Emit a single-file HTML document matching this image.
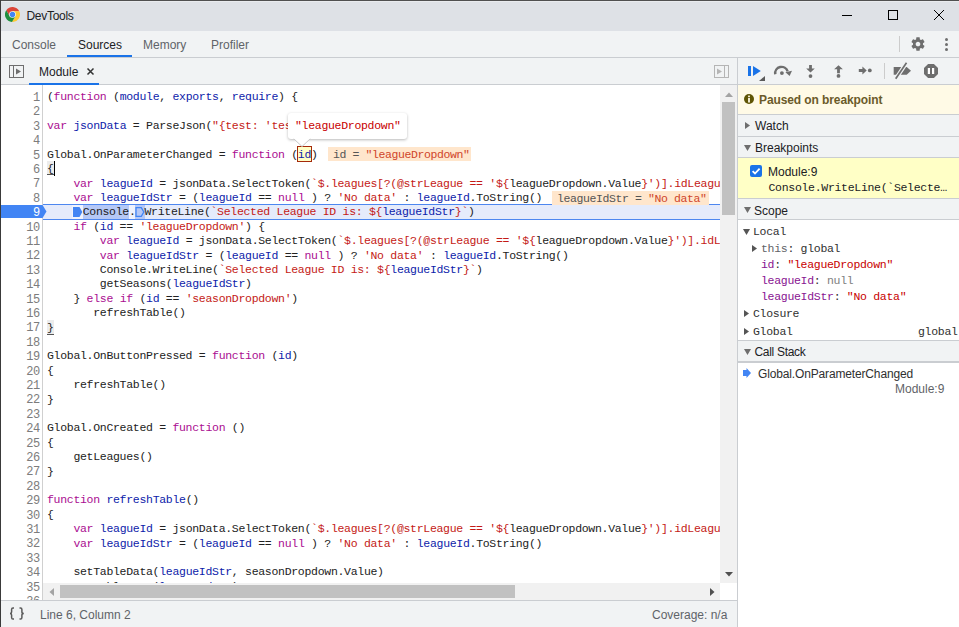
<!DOCTYPE html>
<html><head><meta charset="utf-8">
<style>
*{box-sizing:border-box}
html,body{margin:0;padding:0}
body{width:959px;height:627px;position:relative;overflow:hidden;background:#fff;font-family:"Liberation Sans",sans-serif;font-size:12px;color:#202124}
.a{position:absolute}
.mono{font-family:"Liberation Mono",monospace;font-size:11px}
.sm{font-size:11.5px;letter-spacing:-0.3px;white-space:pre}
.tb{background:#f1f3f4}
.hl{background:#cacdd1}
/* code */
#code{position:absolute;left:43px;top:85px;width:677px;height:498px;overflow:hidden}
#gut{position:absolute;left:1px;top:85px;width:41px;height:515px;overflow:visible;background:#fff}
.ln{position:absolute;left:0;width:38.5px;text-align:right;font-family:"Liberation Mono",monospace;font-size:12px;letter-spacing:-0.6px;line-height:14.4px;height:14.4px;color:#7c7c7c}
.cl{position:absolute;left:4px;white-space:pre;font-family:"Liberation Mono",monospace;font-size:11.5px;letter-spacing:-0.3px;line-height:14.4px;height:14.4px;color:#222}
.k{color:#aa0d91}
.s{color:#c41a16}
.d{color:#0d22aa}
.exec{position:absolute;left:0;top:119px;width:677px;height:16px;background:#e5ebfb;border-top:1px solid #4d87f0;border-bottom:1px solid #4d87f0}
.HL{background:#b9cbf5}
.m1,.m2{display:inline-block;width:10px;height:10px;vertical-align:-1px}
.ID{}
.BR{}
.sec{position:absolute;left:738px;width:221px;background:#f1f3f4;border-bottom:1px solid #cacdd1}
.tri-r{position:absolute;width:0;height:0;border-top:3.5px solid transparent;border-bottom:3.5px solid transparent;border-left:5px solid #6e6e6e}
.tri-d{position:absolute;width:0;height:0;border-left:3.5px solid transparent;border-right:3.5px solid transparent;border-top:6px solid #6e6e6e}
</style></head><body>
<!-- window frame -->
<div class="a" style="left:0;top:0;width:959px;height:1px;background:#505050"></div>
<div class="a" style="left:0;top:0;width:1px;height:627px;background:#3a3a3a"></div>
<!-- title bar -->
<div class="a" style="left:1px;top:1px;width:958px;height:30px;background:#dee1e6"></div>
<div class="a" style="left:1px;top:1px;width:958px;height:1px;background:#e9ebee"></div>
<div class="a" id="title" style="left:26.5px;top:9px;font-size:12px;color:#202124;letter-spacing:-0.3px">DevTools</div>


<!-- tab bar -->
<div class="a tb" style="left:1px;top:31px;width:958px;height:26px"></div>
<div class="a hl" style="left:1px;top:57px;width:958px;height:1px"></div>
<div class="a" style="left:12px;top:38px;color:#5f6368">Console</div>
<div class="a" style="left:78px;top:38px;color:#202124">Sources</div>
<div class="a" style="left:143px;top:38px;color:#5f6368">Memory</div>
<div class="a" style="left:211px;top:38px;color:#5f6368">Profiler</div>
<div class="a" style="left:67px;top:55px;width:65px;height:2px;background:#1a73e8"></div>

<!-- sources toolbar -->
<div class="a tb" style="left:1px;top:58px;width:958px;height:26px"></div>
<div class="a hl" style="left:1px;top:84px;width:958px;height:1px"></div>
<div class="a" style="left:39px;top:65px;color:#202124">Module</div>
<div class="a" style="left:29px;top:83px;width:70px;height:2px;background:#1a73e8"></div>

<!-- vertical separator -->
<div class="a hl" style="left:737px;top:58px;width:1px;height:569px"></div>

<!-- gutter -->
<div id="gut">
<div class="ln" style="top:6.05px">1</div>
<div class="ln" style="top:20.45px">2</div>
<div class="ln" style="top:34.85px">3</div>
<div class="ln" style="top:49.25px">4</div>
<div class="ln" style="top:63.65px">5</div>
<div class="ln" style="top:78.05px">6</div>
<div class="ln" style="top:92.45px">7</div>
<div class="ln" style="top:106.85px">8</div>
<svg class="a" style="left:0;top:120px;z-index:5" width="46" height="13" viewBox="0 0 46 13"><path d="M0 0H41.5L45.5 6.5L41.5 13H0Z" fill="#4285f4"/></svg>
<div class="ln" style="top:121.25px;color:#fff;z-index:6">9</div>
<div class="ln" style="top:135.65px">10</div>
<div class="ln" style="top:150.05px">11</div>
<div class="ln" style="top:164.45px">12</div>
<div class="ln" style="top:178.85px">13</div>
<div class="ln" style="top:193.25px">14</div>
<div class="ln" style="top:207.65px">15</div>
<div class="ln" style="top:222.05px">16</div>
<div class="ln" style="top:236.45px">17</div>
<div class="ln" style="top:250.85px">18</div>
<div class="ln" style="top:265.25px">19</div>
<div class="ln" style="top:279.65px">20</div>
<div class="ln" style="top:294.05px">21</div>
<div class="ln" style="top:308.45px">22</div>
<div class="ln" style="top:322.85px">23</div>
<div class="ln" style="top:337.25px">24</div>
<div class="ln" style="top:351.65px">25</div>
<div class="ln" style="top:366.05px">26</div>
<div class="ln" style="top:380.45px">27</div>
<div class="ln" style="top:394.85px">28</div>
<div class="ln" style="top:409.25px">29</div>
<div class="ln" style="top:423.65px">30</div>
<div class="ln" style="top:438.05px">31</div>
<div class="ln" style="top:452.45px">32</div>
<div class="ln" style="top:466.85px">33</div>
<div class="ln" style="top:481.25px">34</div>
<div class="ln" style="top:495.65px">35</div>
<div class="ln" style="top:510.05px">36</div>
</div>
<div class="a" style="left:42px;top:85px;width:1px;height:515px;background:#d0d0d0"></div>
<div class="a" style="left:47px;top:161px;width:7px;height:14px;background:#ececec;border-bottom:1px solid #555"></div>
<div class="a" style="left:47px;top:320px;width:7px;height:15px;background:#ececec;border-bottom:1px solid #555"></div>
<div id="code">
<div class="cl" style="top:5.25px">(<span class="k">function</span> (<span class="d">module</span>, <span class="d">exports</span>, <span class="d">require</span>) {</div>
<div class="cl" style="top:34.05px"><span class="k">var</span> <span class="d">jsonData</span> = ParseJson(<span class="s">"{test: 'test'}"</span>)</div>
<div class="cl" style="top:62.85px">Global.OnParameterChanged = <span class="k">function</span> (<span class="ID">id</span>)</div>
<div class="cl" style="top:77.25px"><span class="BR">{</span></div>
<div class="cl" style="top:91.65px">    <span class="k">var</span> <span class="d">leagueId</span> = jsonData.SelectToken(<span class="s">`$.leagues[?(@strLeague == '${</span>leagueDropdown.Value<span class="s">}')].idLeague`)</span></div>
<div class="cl" style="top:106.05px">    <span class="k">var</span> <span class="d">leagueIdStr</span> = (<span class="d">leagueId</span> == <span class="k">null</span> ) ? <span class="s">'No data'</span> : <span class="d">leagueId</span>.ToString()</div>
<div class="exec"></div><div class="a" style="left:29px;top:120px;width:11px;height:14px;background:#eff3fd"></div><div class="a" style="left:40px;top:120px;width:45.75px;height:14px;background:#b5c8f6"></div><div class="a" style="left:85.75px;top:120px;width:6.25px;height:14px;background:#eef2fd"></div><div class="a" style="left:92px;top:120px;width:9.7px;height:14px;background:#b5c8f6"></div><svg class="a" style="left:30px;top:122px" width="10" height="10" viewBox="0 0 10 10"><path d="M0 0H6.5L9.3 5L6.5 10H0Z" fill="#4285f4"/></svg><svg class="a" style="left:92px;top:122px" width="10" height="10" viewBox="0 0 10 10"><path d="M1 0.7H6.3L8.8 5L6.3 9.3H1Z" fill="none" stroke="#4285f4" stroke-width="1.3"/></svg>
<div class="cl" style="top:120.45px"></div><div class="cl" style="top:120.45px;left:39.7px">Console.</div><div class="cl" style="top:120.45px;left:101.5px">WriteLine(<span class="s">`Selected League ID is: ${</span><span class="d">leagueIdStr</span><span class="s">}`</span>)</div>
<div class="cl" style="top:134.85px">    <span class="k">if</span> (<span class="d">id</span> == <span class="s">'leagueDropdown'</span>) {</div>
<div class="cl" style="top:149.25px">        <span class="k">var</span> <span class="d">leagueId</span> = jsonData.SelectToken(<span class="s">`$.leagues[?(@strLeague == '${</span>leagueDropdown.Value<span class="s">}')].idLeague`)</span></div>
<div class="cl" style="top:163.65px">        <span class="k">var</span> <span class="d">leagueIdStr</span> = (<span class="d">leagueId</span> == <span class="k">null</span> ) ? <span class="s">'No data'</span> : <span class="d">leagueId</span>.ToString()</div>
<div class="cl" style="top:178.05px">        Console.WriteLine(<span class="s">`Selected League ID is: ${</span><span class="d">leagueIdStr</span><span class="s">}`</span>)</div>
<div class="cl" style="top:192.45px">        getSeasons(<span class="d">leagueIdStr</span>)</div>
<div class="cl" style="top:206.85px">    } <span class="k">else</span> <span class="k">if</span> (<span class="d">id</span> == <span class="s">'seasonDropdown'</span>)</div>
<div class="cl" style="top:221.25px">       refreshTable()</div>
<div class="cl" style="top:235.65px"><span class="BR">}</span></div>
<div class="cl" style="top:264.45px">Global.OnButtonPressed = <span class="k">function</span> (<span class="d">id</span>)</div>
<div class="cl" style="top:278.85px">{</div>
<div class="cl" style="top:293.25px">    refreshTable()</div>
<div class="cl" style="top:307.65px">}</div>
<div class="cl" style="top:336.45px">Global.OnCreated = <span class="k">function</span> ()</div>
<div class="cl" style="top:350.85px">{</div>
<div class="cl" style="top:365.25px">    getLeagues()</div>
<div class="cl" style="top:379.65px">}</div>
<div class="cl" style="top:408.45px"><span class="k">function</span> <span class="d">refreshTable</span>()</div>
<div class="cl" style="top:422.85px">{</div>
<div class="cl" style="top:437.25px">    <span class="k">var</span> <span class="d">leagueId</span> = jsonData.SelectToken(<span class="s">`$.leagues[?(@strLeague == '${</span>leagueDropdown.Value<span class="s">}')].idLeague`)</span></div>
<div class="cl" style="top:451.65px">    <span class="k">var</span> <span class="d">leagueIdStr</span> = (<span class="d">leagueId</span> == <span class="k">null</span> ) ? <span class="s">'No data'</span> : <span class="d">leagueId</span>.ToString()</div>
<div class="cl" style="top:480.45px">    setTableData(<span class="d">leagueIdStr</span>, seasonDropdown.Value)</div>
<div class="cl" style="top:494.85px">    setTableData(<span class="d">leagueIdStr</span>)</div>
</div>


<!-- code overlays -->
<div class="a" style="left:297px;top:146px;width:15px;height:16px;background:#fffec6;border:1px solid #a52a0a"></div>
<div class="a mono" style="left:297.8px;top:147.6px;font-size:11.5px;letter-spacing:-0.3px;line-height:14.4px;color:#0d22aa">id</div>
<div class="a" style="left:327.5px;top:147px;width:143.5px;height:14px;background:#ffe6cc"></div>
<div class="a mono" style="left:333px;top:147.5px;font-size:11.5px;letter-spacing:-0.4px;line-height:14px;white-space:pre"><span style="color:#555">id = </span><span style="color:#d0452a">"leagueDropdown"</span></div>
<div class="a" style="left:552px;top:191px;width:157px;height:14px;background:#ffe6cc"></div>
<div class="a mono" style="left:557px;top:191.5px;font-size:11.5px;letter-spacing:-0.4px;line-height:14px;white-space:pre"><span style="color:#555">leagueIdStr = </span><span style="color:#d0452a">"No data"</span></div>
<div class="a" style="left:288px;top:113px;width:119px;height:26px;background:#fff;border-radius:3px;box-shadow:0 1px 3px rgba(0,0,0,.28)"></div>
<svg class="a" style="left:292.5px;top:137px" width="18" height="10" viewBox="0 0 18 10"><path d="M0.5 1.5L9 9.5L17.5 1.5" fill="#fff" stroke="#c8c8c8" stroke-width="1"/><rect x="0" y="0" width="18" height="1.6" fill="#fff"/></svg>
<div class="a mono" style="left:295px;top:119px;font-size:11.5px;letter-spacing:-0.3px;line-height:14.4px;color:#c80000;white-space:pre">"leagueDropdown"</div>
<div class="a" style="left:54px;top:161px;width:1px;height:15px;background:#000"></div>

<!-- scrollbars -->
<div class="a" style="left:720px;top:85px;width:17px;height:498px;background:#f1f1f1"></div>
<div class="a" style="left:722px;top:102px;width:13px;height:113px;background:#c1c1c1"></div>
<div class="a" style="left:43px;top:583px;width:677px;height:17px;background:#f1f1f1"></div>
<div class="a" style="left:60px;top:585px;width:455px;height:13px;background:#c1c1c1"></div>

<svg class="a" style="left:724.5px;top:91.5px" width="8" height="5" viewBox="0 0 8 5"><path d="M0 5L4 0.5L8 5Z" fill="#a3a3a3"/></svg>
<svg class="a" style="left:724.5px;top:571.5px" width="8" height="5" viewBox="0 0 8 5"><path d="M0 0H8L4 4.5Z" fill="#505050"/></svg>
<svg class="a" style="left:709.5px;top:587.5px" width="5" height="8" viewBox="0 0 5 8"><path d="M0 0L4.5 4L0 8Z" fill="#505050"/></svg>
<svg class="a" style="left:48.5px;top:587.5px" width="5" height="8" viewBox="0 0 5 8"><path d="M5 0L0.5 4L5 8Z" fill="#a3a3a3"/></svg>
<div class="a" style="left:720px;top:583px;width:17px;height:17px;background:#fff"></div>
<!-- status bar -->
<div class="a hl" style="left:1px;top:600px;width:736px;height:1px"></div>
<div class="a tb" style="left:1px;top:601px;width:736px;height:26px"></div>
<div class="a" style="left:40px;top:608px;color:#5f6368">Line 6, Column 2</div>
<div class="a" style="left:652px;top:608px;color:#5f6368">Coverage: n/a</div>

<svg class="a" style="left:9px;top:607px" width="17" height="13" viewBox="0 0 17 13"><path d="M5 1H4C3 1 2.6 1.6 2.6 2.6V5C2.6 5.8 2 6.5 1 6.5C2 6.5 2.6 7.2 2.6 8V10.4C2.6 11.4 3 12 4 12H5" fill="none" stroke="#5a5a5a" stroke-width="1.5"/><path d="M10.5 1H11.5C12.5 1 12.9 1.6 12.9 2.6V5C12.9 5.8 13.5 6.5 14.8 6.5C13.5 6.5 12.9 7.2 12.9 8V10.4C12.9 11.4 12.5 12 11.5 12H10.5" fill="none" stroke="#5a5a5a" stroke-width="1.5"/></svg>
<!-- sidebar -->
<div class="a" style="left:738px;top:85px;width:221px;height:30px;background:#fffae6;border-bottom:1px solid #cacdd1"></div>
<div class="a" style="left:759px;top:93px;font-weight:bold;color:#6b5a2a;letter-spacing:-0.1px">Paused on breakpoint</div>
<div class="sec" style="top:115px;height:22px"></div>
<div class="a" style="left:755px;top:119px">Watch</div>
<div class="sec" style="top:137px;height:21px"></div>
<div class="a" style="left:755px;top:141px">Breakpoints</div>
<div class="a" style="left:738px;top:158px;width:221px;height:41px;background:#ffffc6;border-bottom:1px solid #cacdd1"></div>
<div class="a" style="left:768px;top:165px">Module:9</div>
<div class="sec" style="top:199px;height:21px"></div>
<div class="a" style="left:754px;top:204px">Scope</div>
<div class="sec" style="top:341px;height:22px;border-bottom:2px solid #cacdd1"></div>
<div class="a" style="left:754.5px;top:345px;letter-spacing:-0.3px">Call Stack</div>
<div class="a" style="left:758px;top:367px;letter-spacing:-0.15px;color:#303030">Global.OnParameterChanged</div>
<div class="a" style="left:895px;top:382px;color:#5f6368">Module:9</div>

<!-- sidebar extras -->
<svg class="a" style="left:744px;top:94px" width="10" height="10" viewBox="0 0 10 10"><circle cx="5" cy="5" r="5" fill="#5f5505"/><rect x="4.1" y="1.6" width="1.8" height="1.6" fill="#fffae6"/><rect x="4.1" y="4" width="1.8" height="4.5" fill="#fffae6"/></svg>
<svg class="a" style="left:745px;top:122px" width="5" height="7" viewBox="0 0 5 7"><path d="M0 0L5 3.5L0 7Z" fill="#6e6e6e"/></svg>
<svg class="a" style="left:744px;top:145px" width="7" height="6" viewBox="0 0 7 6"><path d="M0 0H7L3.5 6Z" fill="#6e6e6e"/></svg>
<svg class="a" style="left:744px;top:207px" width="7" height="6" viewBox="0 0 7 6"><path d="M0 0H7L3.5 6Z" fill="#6e6e6e"/></svg>
<svg class="a" style="left:744px;top:349px" width="7" height="6" viewBox="0 0 7 6"><path d="M0 0H7L3.5 6Z" fill="#6e6e6e"/></svg>
<svg class="a" style="left:750px;top:165px" width="12" height="12" viewBox="0 0 12 12"><rect width="12" height="12" rx="2" fill="#1a73e8"/><path d="M2.6 6.2L5 8.5L9.6 3.6" fill="none" stroke="#fff" stroke-width="1.8"/></svg>
<div class="a mono sm" style="left:768.5px;top:181px;color:#202124">Console.WriteLine(`Selecte…</div>
<svg class="a" style="left:743px;top:229px" width="7" height="6" viewBox="0 0 7 6"><path d="M0 0H7L3.5 6Z" fill="#555"/></svg>
<div class="a mono sm" style="left:753px;top:225px;color:#303030">Local</div>
<svg class="a" style="left:752px;top:245px" width="5" height="7" viewBox="0 0 5 7"><path d="M0 0L5 3.5L0 7Z" fill="#555"/></svg>
<div class="a mono sm" style="left:761px;top:241.5px"><span style="color:#5f6368">this</span><span style="color:#303030">: global</span></div>
<div class="a mono sm" style="left:761px;top:258px"><span style="color:#881391">id</span><span style="color:#303030">: </span><span style="color:#c80000">"leagueDropdown"</span></div>
<div class="a mono sm" style="left:761px;top:274px"><span style="color:#881391">leagueId</span><span style="color:#303030">: </span><span style="color:#808080">null</span></div>
<div class="a mono sm" style="left:761px;top:290px"><span style="color:#881391">leagueIdStr</span><span style="color:#303030">: </span><span style="color:#c80000">"No data"</span></div>
<svg class="a" style="left:744px;top:310px" width="5" height="7" viewBox="0 0 5 7"><path d="M0 0L5 3.5L0 7Z" fill="#555"/></svg>
<div class="a mono sm" style="left:753px;top:307px;color:#303030">Closure</div>
<svg class="a" style="left:744px;top:328px" width="5" height="7" viewBox="0 0 5 7"><path d="M0 0L5 3.5L0 7Z" fill="#555"/></svg>
<div class="a mono sm" style="left:753px;top:324.5px;color:#303030">Global</div>
<div class="a mono sm" style="left:918px;top:324.5px;color:#303030">global</div>
<div class="a" style="left:738px;top:340px;width:221px;height:1px;background:#cacdd1"></div>
<svg class="a" style="left:743px;top:368px" width="8" height="10" viewBox="0 0 8 10"><path d="M0 2H3.5V0L8 5L3.5 10V8H0Z" fill="#4285f4"/></svg>

<!-- chrome logo -->
<svg class="a" style="left:5px;top:7px" width="15" height="15" viewBox="0 0 30 30">
 <path d="M2.55 6.63A15 15 0 0 1 28.47 8.40L15.00 8.40L15 15L9.28 18.30Z" fill="#db4437"/>
 <path d="M28.47 8.40A15 15 0 0 1 13.98 29.97L20.72 18.30L15 15L15.00 8.40Z" fill="#fcc934"/>
 <path d="M13.98 29.97A15 15 0 0 1 2.55 6.63L9.28 18.30L15 15L20.72 18.30Z" fill="#1e8e3e"/>
 <circle cx="15" cy="15" r="6.6" fill="#fff"/>
 <circle cx="15" cy="15" r="5.4" fill="#4285f4"/>
</svg>
<!-- window controls -->
<div class="a" style="left:842px;top:15px;width:10px;height:1px;background:#000"></div>
<div class="a" style="left:888px;top:10px;width:10px;height:10px;border:1px solid #000"></div>
<svg class="a" style="left:933px;top:9px" width="12" height="12" viewBox="0 0 12 12"><path d="M1 1L11 11M11 1L1 11" stroke="#000" stroke-width="1"/></svg>
<!-- tabbar right icons -->
<div class="a" style="left:899px;top:36px;width:1px;height:16px;background:#ccc"></div>
<svg class="a" style="left:910px;top:36px" width="16" height="16" viewBox="0 0 24 24"><path fill="#6e6e6e" d="M19.43 12.98c.04-.32.07-.64.07-.98s-.03-.66-.07-.98l2.11-1.65c.19-.15.24-.42.12-.64l-2-3.46c-.12-.22-.39-.3-.61-.22l-2.49 1c-.52-.4-1.08-.73-1.69-.98l-.38-2.65C14.46 2.18 14.25 2 14 2h-4c-.25 0-.46.18-.49.42l-.38 2.65c-.61.25-1.17.59-1.69.98l-2.49-1c-.23-.09-.49 0-.61.22l-2 3.46c-.13.22-.07.49.12.64l2.11 1.65c-.04.32-.07.65-.07.98s.03.66.07.98l-2.11 1.65c-.19.15-.24.42-.12.64l2 3.46c.12.22.39.3.61.22l2.49-1c.52.4 1.08.73 1.69.98l.38 2.650c.03.24.24.42.49.42h4c.25 0 .46-.18.49-.42l.38-2.65c.61-.25 1.17-.59 1.69-.98l2.49 1c.23.09.49 0 .61-.22l2-3.46c.12-.22.07-.49-.12-.64l-2.11-1.65zM12 15.5c-1.93 0-3.5-1.57-3.5-3.5s1.57-3.5 3.5-3.5 3.5 1.57 3.5 3.5-1.57 3.5-3.5 3.5z"/></svg>
<div class="a" style="left:945px;top:38px;width:3px;height:3px;border-radius:2px;background:#6e6e6e"></div>
<div class="a" style="left:945px;top:43px;width:3px;height:3px;border-radius:2px;background:#6e6e6e"></div>
<div class="a" style="left:945px;top:48px;width:3px;height:3px;border-radius:2px;background:#6e6e6e"></div>
<!-- sources toolbar icons -->
<svg class="a" style="left:9px;top:65px" width="15" height="13" viewBox="0 0 15 13"><rect x="0.5" y="0.5" width="14" height="12" fill="none" stroke="#6e6e6e"/><path d="M4.5 1V12" stroke="#6e6e6e"/><path d="M7 3.5L12 6.5L7 9.5Z" fill="#6e6e6e"/></svg>
<svg class="a" style="left:86px;top:67px" width="9" height="9" viewBox="0 0 9 9"><path d="M1.5 1.5L7.5 7.5M7.5 1.5L1.5 7.5" stroke="#333" stroke-width="1.5"/></svg>
<svg class="a" style="left:714px;top:65px" width="15" height="13" viewBox="0 0 15 13"><rect x="0.5" y="0.5" width="14" height="12" fill="none" stroke="#b5b5b5"/><path d="M10.5 1V12" stroke="#b5b5b5"/><path d="M3 3.5L8 6.5L3 9.5Z" fill="#b5b5b5"/></svg>
<!-- debugger toolbar -->
<div class="a" style="left:748px;top:66px;width:3px;height:10px;background:#1a73e8"></div>
<svg class="a" style="left:753px;top:66px" width="8" height="10" viewBox="0 0 8 10"><path d="M0 0L7.8 5L0 10Z" fill="#1a73e8"/></svg>
<svg class="a" style="left:759px;top:76px" width="6" height="5" viewBox="0 0 6 5"><path d="M6 0V5H0Z" fill="#5a5a5a"/></svg>
<svg class="a" style="left:773px;top:64px" width="20" height="14" viewBox="0 0 20 14"><path d="M2.25 10.2A6.35 6.35 0 0 1 14.6 7.4" fill="none" stroke="#6e6e6e" stroke-width="2.5"/><path d="M12.4 8.3L19 6.8L16.6 12Z" fill="#6e6e6e"/><circle cx="8.9" cy="9.1" r="1.9" fill="#6e6e6e"/></svg>
<svg class="a" style="left:804px;top:64px" width="13" height="15" viewBox="0 0 13 15"><path d="M5.1 1H7.9V4.4H10.8L6.5 8.6L2.2 4.4H5.1Z" fill="#6e6e6e"/><circle cx="6.5" cy="12.1" r="1.9" fill="#6e6e6e"/></svg>
<svg class="a" style="left:832px;top:64px" width="13" height="15" viewBox="0 0 13 15"><path d="M5.1 9.2H7.9V5.3H10.9L6.5 1.2L2.1 5.3H5.1Z" fill="#6e6e6e"/><circle cx="6.5" cy="11.9" r="1.9" fill="#6e6e6e"/></svg>
<svg class="a" style="left:858px;top:64px" width="16" height="13" viewBox="0 0 16 13"><path d="M0.8 5.1H4.4V2.6L8.7 6.5L4.4 10.4V7.9H0.8Z" fill="#6e6e6e"/><circle cx="11.8" cy="6.4" r="1.9" fill="#6e6e6e"/></svg>
<div class="a" style="left:884px;top:63px;width:1px;height:16px;background:#ccc"></div>
<svg class="a" style="left:892px;top:62px" width="20" height="18" viewBox="0 0 20 18"><path d="M1.7 5H14.7L19 8.85L14.7 12.7H1.7Z" fill="#6e6e6e"/><path d="M14.5 0.8L3.7 16.8" stroke="#f1f3f4" stroke-width="4"/><path d="M14.5 0.8L3.7 16.8" stroke="#6e6e6e" stroke-width="1.7"/></svg>
<svg class="a" style="left:924px;top:64px" width="14" height="14" viewBox="0 0 14 14"><path d="M4.1 0H9.9L14 4.1V9.9L9.9 14H4.1L0 9.9V4.1Z" fill="#6e6e6e"/><rect x="3.8" y="4" width="2.2" height="6" fill="#fff"/><rect x="8" y="4" width="2.2" height="6" fill="#fff"/></svg>

</body></html>
